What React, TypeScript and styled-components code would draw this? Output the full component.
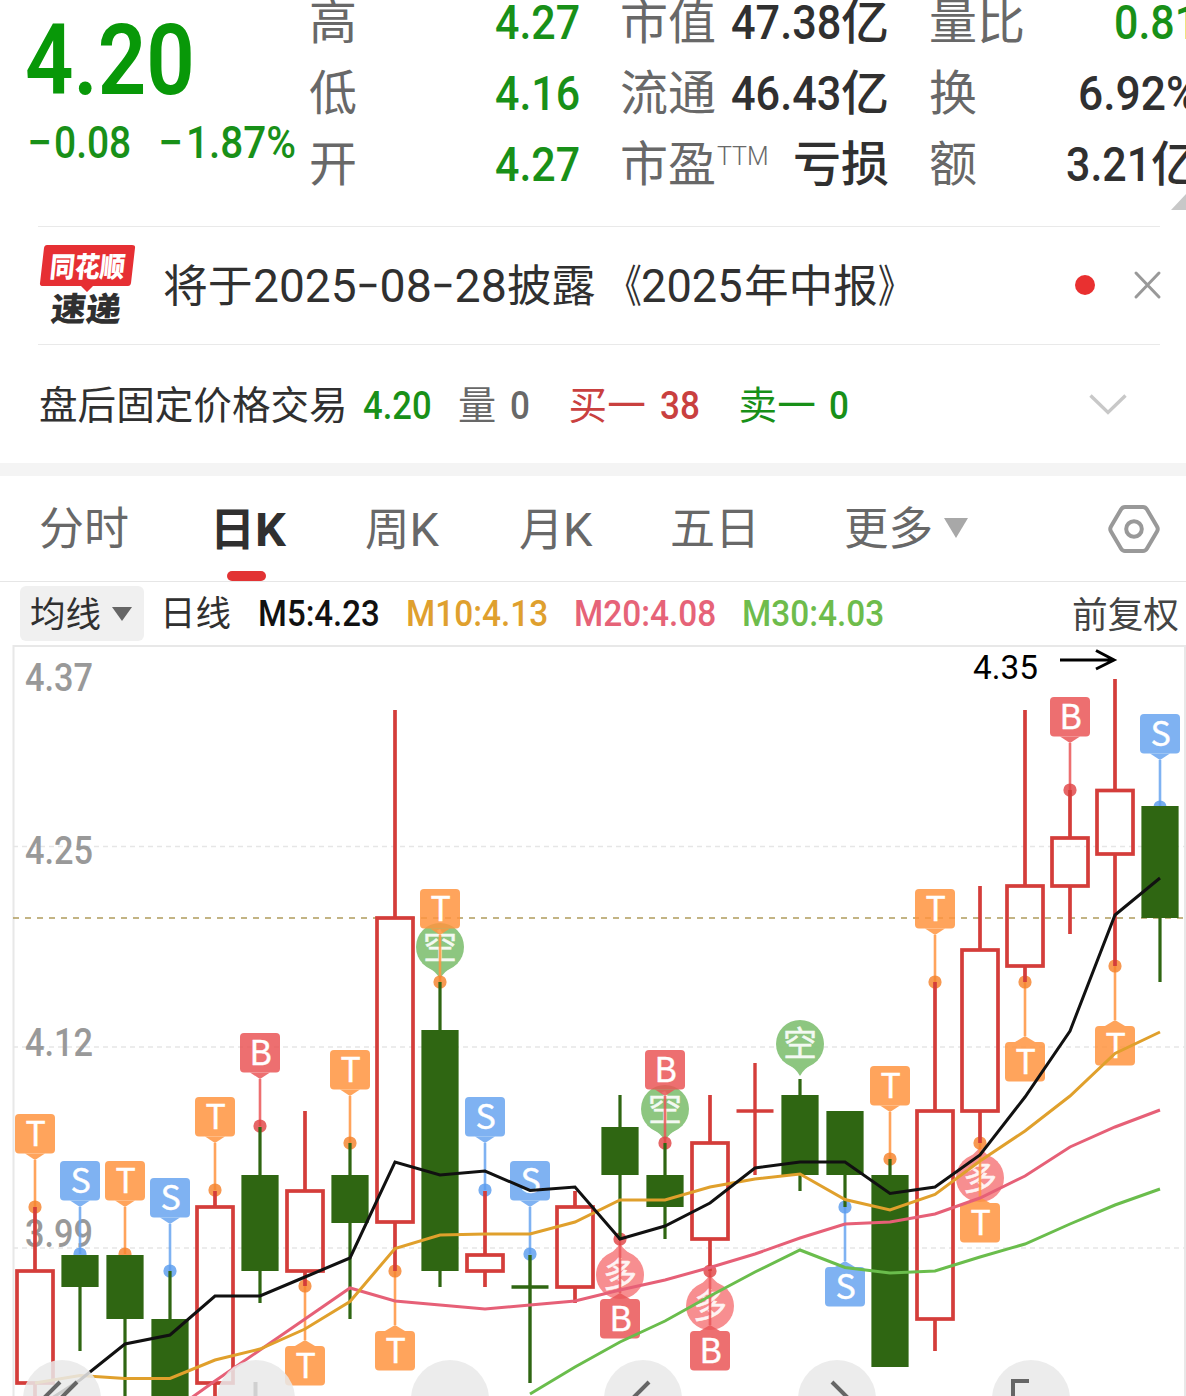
import React, { useLayoutEffect, useRef, useState } from "react";
import styled, { createGlobalStyle } from "styled-components";

const UP = "#d43d3a";
const DOWN = "#2f6612";
const GREEN = "#189018";
const RED = "#c9403f";
const INK = "#303030";
const MUTED = "#686868";
const FONT = `Roboto, "Noto Sans CJK SC", sans-serif`;
const CJK = `"Noto Sans CJK SC", sans-serif`;

const GlobalStyle = createGlobalStyle`
  html, body { margin: 0; padding: 0; background: #fff; overflow: hidden; }
`;

const Screen = styled.main`
  width: 1186px;
  height: 1396px;
  overflow: hidden;
  background: #fff;
  color: ${INK};
  font-family: ${FONT};
  display: flex;
  flex-direction: column;
`;

/* Text squeezed horizontally to a given width, like a condensed numeric face */
const FitBox = styled.span<{ $w: number; $ml: number; $size?: number; $weight?: number; $color?: string }>`
  display: block;
  flex: none;
  width: ${(p) => p.$w}px;
  margin-left: ${(p) => p.$ml}px;
  white-space: nowrap;
  ${(p) => p.$size && `font-size: ${p.$size}px;`}
  ${(p) => p.$weight && `font-weight: ${p.$weight};`}
  ${(p) => p.$color && `color: ${p.$color};`}
`;
const FitInner = styled.span`
  display: inline-block;
  transform-origin: 0 50%;
`;

type FitProps = { w: number; ml?: number; size?: number; weight?: number; color?: string; children: React.ReactNode };
function Fit({ w, ml = 0, size, weight, color, children }: FitProps) {
  const ref = useRef<HTMLSpanElement>(null);
  const [scale, setScale] = useState(1);
  useLayoutEffect(() => {
    if (ref.current) setScale(w / ref.current.offsetWidth);
  }, [w, children]);
  return (
    <FitBox $w={w} $ml={ml} $size={size} $weight={weight} $color={color}>
      <FitInner ref={ref} style={{ transform: `scaleX(${scale})` }}>
        {children}
      </FitInner>
    </FitBox>
  );
}

/* ---------- quote header ---------- */
const Quote = styled.section`
  height: 226px;
  flex: none;
  display: grid;
  grid-template-columns: 310px 270px 41px 268px 41px 269px;
  overflow: hidden;
`;
const PriceCol = styled.div`
  display: flex;
  flex-direction: column;
  color: ${GREEN};
`;
const Price = styled.div`
  height: 122px;
  line-height: 121px;
  font-size: 99px;
  color: #089808;
  display: flex;
`;
const Change = styled.div`
  line-height: 42px;
  font-size: 44.5px;
  display: flex;
`;
const StatCol = styled.div<{ $col: number }>`
  grid-column: ${(p) => p.$col};
  grid-row: 1;
  margin-top: -13px;
  display: grid;
  grid-auto-rows: 71px;
  align-content: start;
`;
const Stat = styled.div`
  display: flex;
  align-items: baseline;
  line-height: 71px;
  font-size: 48px;
`;
const Label = styled.span`
  color: ${MUTED};
  display: flex;
  align-items: flex-start;
  flex: 1;
  margin-left: -1px;
`;
const Sup = styled.sup`
  font-size: 25px;
  font-weight: 300;
  line-height: 1;
  margin: 15px 0 0 1px;
`;
const Corner = styled.i`
  grid-column: 6;
  grid-row: 1;
  align-self: end;
  justify-self: start;
  margin: 0 0 16px 241px;
  width: 0;
  height: 0;
  border-left: 16px solid transparent;
  border-bottom: 17px solid #c8c8c8;
`;

/* ---------- news and after-hours ---------- */
const News = styled.section`
  height: 117px;
  flex: none;
  margin: 0 26px 0 38px;
  border-top: 1px solid #e9e9e9;
  border-bottom: 1px solid #e9e9e9;
  display: flex;
  align-items: center;
`;
const Headline = styled.div`
  display: flex;
  align-items: baseline;
  font-size: 44.6px;
  line-height: 117px;
  margin-left: 24px;
  padding-top: 3px;
  flex: 1;
`;
const Dot = styled.i`
  width: 20px;
  height: 20px;
  border-radius: 50%;
  background: #e93030;
  margin: 0 40px 2px 0;
`;
const Logo = styled.svg`
  width: 101px;
  height: 84px;
  flex: none;
  display: block;
  margin-bottom: 1px;
`;
const Close = styled.span`
  padding-bottom: 1px;
`;
const Icon = styled.svg`
  display: block;
  flex: none;
  fill: none;
  overflow: visible;
`;
const AfterHours = styled.section`
  height: 118px;
  flex: none;
  padding: 2px 59px 0 39px;
  box-sizing: border-box;
  display: flex;
  align-items: baseline;
  font-size: 38.6px;
  line-height: 118px;
`;
const Chevron = styled.span`
  margin-left: auto;
  align-self: center;
  padding-bottom: 2px;
`;
const Band = styled.div`
  height: 13px;
  flex: none;
  background: #f4f4f4;
`;

/* ---------- tabs ---------- */
const Tabs = styled.nav`
  height: 106px;
  flex: none;
  box-sizing: border-box;
  border-bottom: 1px solid #e6e6e6;
  display: flex;
  align-items: flex-start;
  padding: 0 26px 0 39px;
`;
const Tab = styled.div<{ $active?: boolean; $ml?: number }>`
  height: 105px;
  margin-left: ${(p) => p.$ml ?? 0}px;
  display: flex;
  align-items: baseline;
  line-height: 108px;
  font-size: 45px;
  position: relative;
  color: ${(p) => (p.$active ? INK : MUTED)};
  font-weight: ${(p) => (p.$active ? 700 : 400)};
`;
const Underline = styled.i`
  position: absolute;
  left: 17px;
  bottom: 0;
  width: 39px;
  height: 10px;
  border-radius: 5px;
  background: #e23334;
`;
const Triangle = styled.i<{ $w: number; $h: number; $c: string }>`
  display: block;
  border: ${(p) => p.$w / 2}px solid transparent;
  border-bottom: 0;
  border-top: ${(p) => p.$h}px solid ${(p) => p.$c};
`;
const TabArrow = styled.span`
  align-self: center;
  margin-left: 11px;
  padding-bottom: 2px;
`;
const Settings = styled.span`
  margin-left: auto;
  align-self: center;
`;

/* ---------- indicator bar ---------- */
const Indicators = styled.section`
  height: 63px;
  flex: none;
  box-sizing: border-box;
  padding: 0 7px 0 20px;
  display: flex;
  align-items: center;
  font-size: 36px;
  line-height: 55px;
`;
const Readings = styled.div`
  display: flex;
  align-items: baseline;
  padding-top: 2px;
`;
const Pill = styled.button`
  border: 0;
  margin: 0;
  padding: 0 12px 0 10px;
  width: 124px;
  height: 55px;
  box-sizing: border-box;
  border-radius: 6px;
  background: #f0f0f0;
  color: ${INK};
  font: 35.5px/55px ${FONT};
  display: flex;
  align-items: center;
  justify-content: space-between;
`;
const PillText = styled.span`
  padding-top: 4px;
`;
const Adjust = styled.span`
  margin-left: auto;
  color: #444;
  padding-top: 5px;
`;

/* ---------- chart ---------- */
const ChartBox = styled.section`
  position: relative;
  flex: none;
  height: 751px;
  overflow: hidden;
`;
const ChartSvg = styled.svg`
  display: block;
`;
const Controls = styled.div`
  position: absolute;
  left: 23px;
  top: 715px;
  display: flex;
  gap: 115.8px;
`;
const RoundButton = styled.button`
  border: 0;
  padding: 0;
  width: 78px;
  height: 78px;
  border-radius: 50%;
  background: rgba(233, 233, 233, 0.86);
`;

const X = (i: number) => 35 + 45 * i;

/* [direction, high, bodyTop, bodyBottom, low] in chart units */
const candles: [string, number, number, number, number][] = [
  ["u", 1207, 1271, 1383, 1410],
  ["d", 1255, 1255, 1287, 1351],
  ["d", 1255, 1255, 1319, 1410],
  ["d", 1271, 1319, 1410, 1410],
  ["u", 1191, 1207, 1383, 1410],
  ["d", 1127, 1175, 1271, 1303],
  ["u", 1111, 1191, 1271, 1286],
  ["d", 1143, 1175, 1223, 1319],
  ["u", 710, 918, 1222, 1271],
  ["d", 982, 1030, 1271, 1287],
  ["u", 1191, 1255, 1271, 1287],
  ["d", 1255, 1287, 1287, 1383],
  ["u", 1191, 1207, 1287, 1303],
  ["d", 1095, 1127, 1175, 1240],
  ["d", 1143, 1175, 1207, 1239],
  ["u", 1095, 1143, 1239, 1271],
  ["u", 1063, 1111, 1111, 1175],
  ["d", 1079, 1095, 1175, 1191],
  ["d", 1111, 1111, 1175, 1207],
  ["d", 1159, 1175, 1367, 1367],
  ["u", 982, 1111, 1319, 1351],
  ["u", 886, 950, 1111, 1143],
  ["u", 710, 886, 966, 982],
  ["u", 790, 838, 886, 934],
  ["u", 679, 790.5, 854, 966],
  ["d", 806, 806, 918, 982],
];

const averages = [
  { color: "#6abd4c", from: 11, ys: [1394, 1367, 1342, 1321, 1296, 1272, 1250, 1267.5, 1273, 1271, 1257, 1244, 1224, 1205, 1189] },
  { color: "#e66077", from: 3, ys: [1413, 1381, 1350, 1319, 1288, 1301, 1305, 1309, 1305, 1301, 1290, 1280, 1267.5, 1254, 1238, 1224, 1222, 1214, 1198, 1176, 1147, 1127, 1110] },
  { color: "#e0a02c", from: 0, ys: [1383, 1375.5, 1378.5, 1378.5, 1360, 1349, 1329, 1301.5, 1248.5, 1235, 1234, 1234, 1222, 1200, 1200, 1187, 1179, 1174, 1199.5, 1210, 1194.5, 1161, 1131, 1096, 1053.5, 1032] },
  { color: "#111", from: 0, ys: [1409, 1380, 1344, 1335, 1296, 1296, 1277, 1258, 1162, 1175, 1171, 1190.5, 1187, 1239, 1226, 1203, 1168, 1162, 1162, 1193.5, 1187, 1155, 1097, 1031, 915, 878] },
];

/* [candle index, letter, anchor y, side] */
const marks: [number, "T" | "S" | "B", number, "top" | "bottom"][] = [
  [0, "T", 1207, "top"],
  [1, "S", 1254, "top"],
  [2, "T", 1254, "top"],
  [3, "S", 1271, "top"],
  [4, "T", 1190, "top"],
  [5, "B", 1126, "top"],
  [6, "T", 1286, "bottom"],
  [7, "T", 1143, "top"],
  [8, "T", 1271, "bottom"],
  [9, "T", 982, "top"],
  [10, "S", 1190, "top"],
  [11, "S", 1254, "top"],
  [13, "B", 1239, "bottom"],
  [14, "B", 1143, "top"],
  [15, "B", 1271, "bottom"],
  [18, "S", 1207, "bottom"],
  [19, "T", 1159, "top"],
  [20, "T", 982, "top"],
  [21, "T", 1143, "bottom"],
  [22, "T", 982, "bottom"],
  [23, "B", 790, "top"],
  [24, "T", 966, "bottom"],
  [25, "S", 807, "top"],
];
const markColor = {
  T: ["#ff9540", "#f5832c"],
  S: ["#69a5f0", "#5a9cee"],
  B: ["#ea5658", "#e04446"],
};

const balloons: [number, string, number, boolean][] = [
  [9, "空", 947, true],
  [14, "空", 1109, true],
  [17, "空", 1044, true],
  [13, "多", 1275, false],
  [15, "多", 1306, false],
  [21, "多", 1178, false],
];

function Candle({ i }: { i: number }) {
  const [dir, high, top, bottom, low] = candles[i];
  const x = X(i);
  if (top === bottom)
    return (
      <g stroke={dir === "u" ? UP : DOWN} strokeWidth={3.4}>
        <path d={`M${x} ${high}V${low}M${x - 18.5} ${top}H${x + 18.5}`} />
      </g>
    );
  if (dir === "u")
    return (
      <g stroke={UP} strokeWidth={3.7} fill="none">
        <path d={`M${x} ${high}V${top}M${x} ${bottom}V${low}`} />
        <rect x={x - 18} y={top} width={36} height={bottom - top} />
      </g>
    );
  return (
    <g fill={DOWN}>
      <rect x={x - 1.6} y={high} width={3.2} height={low - high} />
      <rect x={x - 18.6} y={top} width={37.2} height={bottom - top} />
    </g>
  );
}

function Mark({ i, letter, y, top }: { i: number; letter: "T" | "S" | "B"; y: number; top: boolean }) {
  const x = X(i);
  const box = top ? y - 93 : y + 60;
  const [fill, dot] = markColor[letter];
  const tip = top ? box + 46 : box - 6;
  const edge = top ? box + 39.5 : box;
  return (
    <g>
      <path d={`M${x} ${tip}V${y}`} stroke={fill} strokeWidth={2.6} opacity={0.85} />
      <circle cx={x} cy={y} r={6.6} fill={dot} opacity={0.82} />
      <g opacity={0.85} fill={fill}>
        <rect x={x - 20} y={box} width={40} height={39.5} rx={4} />
        <path d={`M${x - 10} ${edge}L${x} ${tip}L${x + 10} ${edge}Z`} />
      </g>
      <text x={x + 0.6} y={box + 31.5} fontSize={34} fontFamily={CJK} textAnchor="middle" fill="#fff" stroke="#fff" strokeWidth={0.4}>
        {letter}
      </text>
    </g>
  );
}

function Balloon({ i, text, y, down }: { i: number; text: string; y: number; down: boolean }) {
  const x = X(i);
  const s = down ? 1 : -1;
  return (
    <g opacity={0.92}>
      <path
        d={`M${x - 18} ${y + s * 16}Q${x - 3} ${y + s * 25} ${x} ${y + s * 32}Q${x + 3} ${y + s * 25} ${x + 18} ${y + s * 16}Z`}
        fill={down ? "#84c276" : "#f78587"}
      />
      <circle cx={x} cy={y} r={24} fill={down ? "#84c276" : "#f78587"} />
      <text x={x} y={y + 12} fontSize={34} fontFamily={CJK} textAnchor="middle" fill="#fff" stroke="#fff" strokeWidth={0.5} opacity={0.9}>
        {text}
      </text>
    </g>
  );
}

function Chart() {
  return (
    <ChartSvg width={1186} height={751} viewBox="0 645 1186 751" fontFamily={FONT}>
      <path d="M13.5 1400V646H1185V1400" fill="none" stroke="#e8e8e8" strokeWidth={2} />
      <path d="M13 846.5H1185M13 1047H1185M13 1248H1185" stroke="#e6e6e6" strokeWidth={1.6} strokeDasharray="5 4" />
      <path d="M13 918H1185" stroke="#b09c5c" strokeWidth={1.6} strokeDasharray="6 6" />
      <g fill="#999" fontSize={38} fontWeight={500}>
        <text x={25} y={691} textLength={68} lengthAdjust="spacingAndGlyphs">4.37</text>
        <text x={25} y={864} textLength={68} lengthAdjust="spacingAndGlyphs">4.25</text>
        <text x={25} y={1056} textLength={68} lengthAdjust="spacingAndGlyphs">4.12</text>
        <text x={25} y={1247} textLength={68} lengthAdjust="spacingAndGlyphs">3.99</text>
      </g>
      {balloons.map(([i, text, y, down]) => (
        <Balloon key={i} i={i} text={text} y={y} down={down} />
      ))}
      {marks.map(([i, letter, y, side]) => (
        <Mark key={i} i={i} letter={letter} y={y} top={side === "top"} />
      ))}
      {candles.map((_, i) => (
        <Candle key={i} i={i} />
      ))}
      {averages.map((a) => (
        <polyline
          key={a.color}
          points={a.ys.map((y, k) => `${X(a.from + k)},${y}`).join(" ")}
          fill="none"
          stroke={a.color}
          strokeWidth={3}
        />
      ))}
      <text x={973} y={679} fontSize={34} fill="#000" textLength={65} lengthAdjust="spacingAndGlyphs">4.35</text>
      <path d="M1060 660H1113M1096 650.5L1114 660L1096 669" fill="none" stroke="#000" strokeWidth={3} />
    </ChartSvg>
  );
}

const controlIcons = [
  { d: "M37 22L20 39M54 22L37 39", c: "#666" },
  { d: "M38.5 22V50", c: "#d0d0d0" },
  { d: "", c: "none" },
  { d: "M45 22L28 39", c: "#666" },
  { d: "M34 22L51 39", c: "#666" },
  { d: "M37 21H21V50", c: "#666" },
];

export default function App() {
  return (
    <Screen>
      <GlobalStyle />
      <Quote>
        <PriceCol>
          <Price><Fit ml={25} w={170} weight={600}>4.20</Fit></Price>
          <Change>
            <Fit ml={27} w={25} weight={500}>−</Fit>
            <Fit ml={2} w={77} weight={500}>0.08</Fit>
            <Fit ml={27} w={25} weight={500}>−</Fit>
            <Fit ml={3} w={110} weight={500}>1.87%</Fit>
          </Change>
        </PriceCol>
        <StatCol $col={2}>
          {[["高", "4.27"], ["低", "4.16"], ["开", "4.27"]].map(([k, v]) => (
            <Stat key={k}>
              <Label><Fit w={48}>{k}</Fit></Label>
              <Fit w={85} weight={500} color={GREEN}>{v}</Fit>
            </Stat>
          ))}
        </StatCol>
        <StatCol $col={4}>
          {[["市值", "47.38"], ["流通", "46.43"]].map(([k, v]) => (
            <Stat key={k}>
              <Label><Fit w={96}>{k}</Fit></Label>
              <Fit w={110} weight={500}>{v}</Fit>
              <Fit w={48} weight={500}>亿</Fit>
            </Stat>
          ))}
          <Stat>
            <Label><Fit w={96}>市盈</Fit><Sup>TTM</Sup></Label>
            <Fit w={96} weight={500}>亏损</Fit>
          </Stat>
        </StatCol>
        <StatCol $col={6}>
          <Stat><Label><Fit w={96}>量比</Fit></Label><Fit w={85} weight={500} color={GREEN}>0.81</Fit></Stat>
          <Stat><Label><Fit w={48}>换</Fit></Label><Fit w={121} weight={500}>6.92%</Fit></Stat>
          <Stat>
            <Label><Fit w={48}>额</Fit></Label>
            <Fit w={85} weight={500}>3.21</Fit>
            <Fit w={48} weight={500}>亿</Fit>
          </Stat>
        </StatCol>
        <Corner />
      </Quote>

      <News>
        <Logo viewBox="38 243 101 84">
          <path d="M47 245H132Q135.500 245 135 248L131 283Q130.500 286 128 286H93L87 292L81 286H43Q39.500 286 40 283L44 248Q44.500 245 47 245Z" fill="#e62f33" />
          <text transform="translate(49 276.500) skewX(-6)" fontSize={28} fontWeight={900} fontFamily={CJK} fill="#fff" textLength={75} lengthAdjust="spacingAndGlyphs">同花顺</text>
          <text transform="translate(50 320.500) skewX(-6)" fontSize={33} fontWeight={900} fontFamily={CJK} fill="#303030" textLength={70} lengthAdjust="spacingAndGlyphs">速递</text>
        </Logo>
        <Headline>
          <Fit w={89.500}>将于</Fit>
          <Fit w={104} size={46.5}>2025</Fit>
          <Fit ml={-1} w={24} size={46.5}>−</Fit>
          <Fit w={52} size={46.5}>08</Fit>
          <Fit ml={-1} w={24} size={46.5}>−</Fit>
          <Fit w={52} size={46.5}>28</Fit>
          <Fit w={88.500}>披露</Fit>
          <Fit ml={13} w={34}>《</Fit>
          <Fit ml={-1} w={102} size={46.5}>2025</Fit>
          <Fit ml={1} w={134}>年中报</Fit>
          <Fit w={34}>》</Fit>
        </Headline>
        <Dot />
        <Close>
          <Icon width={25} height={26} viewBox="0 0 25 26">
            <path d="M1 1L24 25M24 1L1 25" stroke="#999" strokeWidth={3} strokeLinecap="round" />
          </Icon>
        </Close>
      </News>

      <AfterHours>
        <Fit w={309}>盘后固定价格交易</Fit>
        <Fit ml={15} w={69} weight={500} color={GREEN}>4.20</Fit>
        <Fit ml={26} w={38.600} color={MUTED}>量</Fit>
        <Fit ml={13} w={20} weight={500} color={MUTED}>0</Fit>
        <Fit ml={39} w={77} color={RED}>买一</Fit>
        <Fit ml={14} w={40} weight={500} color={RED}>38</Fit>
        <Fit ml={39} w={77} color={GREEN}>卖一</Fit>
        <Fit ml={13.500} w={20} weight={500} color={GREEN}>0</Fit>
        <Chevron>
          <Icon width={38} height={20} viewBox="0 0 38 20">
            <path d="M1.500 1.500L19 18.500L36.500 1.500" stroke="#c8c8c8" strokeWidth={3.4} />
          </Icon>
        </Chevron>
      </AfterHours>
      <Band />

      <Tabs>
        <Tab><Fit w={90}>分时</Fit></Tab>
        <Tab $active $ml={81}>
          <Fit w={45}>日</Fit><Fit w={31} size={47}>K</Fit>
          <Underline />
        </Tab>
        <Tab $ml={79}><Fit w={44.500}>周</Fit><Fit w={30} size={47}>K</Fit></Tab>
        <Tab $ml={79}><Fit w={44.500}>月</Fit><Fit w={30} size={47}>K</Fit></Tab>
        <Tab $ml={77}><Fit w={90}>五日</Fit></Tab>
        <Tab $ml={84}>
          <Fit w={89}>更多</Fit>
          <TabArrow><Triangle $w={24} $h={20} $c="#a8a8a8" /></TabArrow>
        </Tab>
        <Settings>
          <Icon width={52} height={48} viewBox="0 0 52 48">
            <path d="M17 2H35Q37.500 2 39 4.500L49 21.500Q50.500 24 49 26.500L39 43.500Q37.500 46 35 46H17Q14.500 46 13 43.500L3 26.500Q1.500 24 3 21.500L13 4.500Q14.500 2 17 2Z" stroke="#999" strokeWidth={4} />
            <circle cx={26} cy={24} r={7.800} stroke="#999" strokeWidth={4} />
          </Icon>
        </Settings>
      </Tabs>

      <Indicators>
        <Pill><PillText><Fit w={71}>均线</Fit></PillText><Triangle $w={20} $h={14} $c="#666" /></Pill>
        <Readings>
          <Fit ml={16} w={71} size={35.500}>日线</Fit>
          <Fit ml={27} w={122} weight={500} color="#111">M5:4.23</Fit>
          <Fit ml={26} w={142} weight={500} color="#dfa02e">M10:4.13</Fit>
          <Fit ml={26} w={142} weight={500} color="#e66378">M20:4.08</Fit>
          <Fit ml={26} w={142} weight={500} color="#6ebc4c">M30:4.03</Fit>
        </Readings>
        <Adjust><Fit w={107}>前复权</Fit></Adjust>
      </Indicators>

      <ChartBox>
        <Chart />
        <Controls>
          {controlIcons.map((icon, i) => (
            <RoundButton key={i}>
              <Icon width={78} height={78} viewBox="0 0 78 78">
                <path d={icon.d} stroke={icon.c} strokeWidth={4} />
              </Icon>
            </RoundButton>
          ))}
        </Controls>
      </ChartBox>
    </Screen>
  );
}
